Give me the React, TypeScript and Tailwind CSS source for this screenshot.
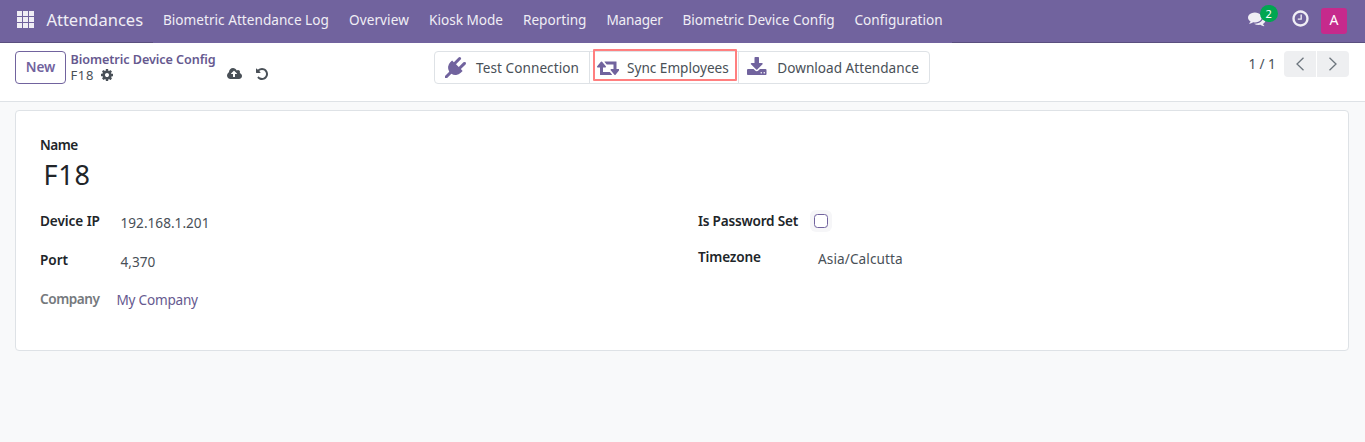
import type { ReactNode } from "react";

const paths = {
  plug: "M1755 453q37 38 37 90.5t-37 90.5l-401 400 150 150-160 160q-163 163-389.5 186.5t-411.5-100.5l-362 362h-181v-181l362-362q-124-185-100.5-411.5t186.5-389.5l160-160 150 150 400-401q38-37 91-37t90 37 37 90.5-37 90.5l-400 401 234 234 401-400q38-37 91-37t90 37z",
  retweet: "M1280 1504q0 13-9.5 22.5t-22.5 9.5h-960q-8 0-13.5-2t-9-7-5.5-8-3-11.5-1-11.5v-600h-192q-26 0-45-19t-19-45q0-24 15-41l320-384q19-22 49-22t49 22l320 384q15 17 15 41 0 26-19 45t-45 19h-192v384h576q16 0 25 11l160 192q7 10 7 21zm640-416q0 24-15 41l-320 384q-20 23-49 23t-49-23l-320-384q-15-17-15-41 0-26 19-45t45-19h192v-384h-576q-16 0-25-12l-160-192q-7-9-7-20 0-13 9.5-22.5t22.5-9.5h960q8 0 13.5 2t9 7 5.5 8 3 11.5 1 11.5v600h192q26 0 45 19t19 45z",
  download: "M1344 1344q0-26-19-45t-45-19-45 19-19 45 19 45 45 19 45-19 19-45zm256 0q0-26-19-45t-45-19-45 19-19 45 19 45 45 19 45-19 19-45zm128-224v320q0 40-28 68t-68 28h-1472q-40 0-68-28t-28-68v-320q0-40 28-68t68-28h465l135 136q58 56 136 56t136-56l136-136h464q40 0 68 28t28 68zm-325-569q17 41-14 70l-448 448q-18 19-45 19t-45-19l-448-448q-31-29-14-70 17-39 59-39h256v-448q0-26 19-45t45-19h256q26 0 45 19t19 45v448h256q42 0 59 39z",
  cog: "M1152 896q0-106-75-181t-181-75-181 75-75 181 75 181 181 75 181-75 75-181zm512-109v222q0 12-8 23t-20 13l-185 28q-19 54-39 91 35 50 107 138 10 12 10 25t-9 23q-27 37-99 108t-94 71q-12 0-26-9l-138-108q-44 23-91 38-16 136-29 186-7 28-36 28h-222q-14 0-24.5-8.5t-11.5-21.5l-28-184q-49-16-90-37l-141 107q-10 9-25 9-14 0-25-11-126-114-165-168-7-10-7-23 0-12 8-23 15-21 51-66.5t54-70.5q-27-50-41-99l-183-27q-13-2-21-12.5t-8-23.5v-222q0-12 8-23t19-13l186-28q14-46 39-92-40-57-107-138-10-12-10-24 0-10 9-23 26-36 98.5-107.5t94.5-71.5q13 0 26 10l138 107q44-23 91-38 16-136 29-186 7-28 36-28h222q14 0 24.5 8.5t11.5 21.5l28 184q49 16 90 37l142-107q9-9 24-9 13 0 25 10 129 119 165 170 7 8 7 22 0 12-8 23-15 21-51 66.5t-54 70.5q26 50 41 98l183 28q13 2 21 12.5t8 23.5z",
  cloudUpload: "M1280 864q0-14-9-23l-352-352q-9-9-23-9t-23 9l-351 351q-10 12-10 24 0 14 9 23t23 9h224v352q0 13 9.5 22.5t22.5 9.5h192q13 0 22.5-9.5t9.5-22.5v-352h224q13 0 22.5-9.5t9.5-22.5zm640 288q0 159-112.5 271.5t-271.5 112.5h-1088q-185 0-316.5-131.5t-131.5-316.5q0-130 70-240t188-165q-2-30-2-43 0-212 150-362t362-150q156 0 285.5 87t188.5 231q71-62 166-62 106 0 181 75t75 181q0 76-41 138 130 31 213.5 135.5t83.5 238.5z",
  undo: "M1664 896q0 156-61 298t-164 245-245 164-298 61q-172 0-327-72.5t-264-204.5q-7-10-6.5-22.5t8.5-20.5l137-138q10-9 25-9 16 2 23 12 73 95 179 147t225 52q104 0 198.5-40.5t163.5-109.5 109.5-163.5 40.5-198.5-40.5-198.5-109.5-163.5-163.5-109.5-198.5-40.5q-98 0-188 35.5t-160 101.5l137 138q31 30 14 69-17 40-59 40h-448q-26 0-45-19t-19-45v-448q0-42 40-59 39-17 69 14l130 129q107-101 244.5-156.5t284.5-55.5q156 0 298 61t245 164 164 245 61 298z",
  comments: "M1408 768q0 139-94 257t-256.5 186.5-353.5 68.5q-86 0-176-16-124 88-278 128-36 9-86 16h-3q-11 0-20.5-8t-11.5-21q-1-3-1-6.5t.5-6.5 2-6l2.5-5 3.5-5.5 4-5 4.5-5 4-4.5q5-6 23-25t26-29.5 22.5-29 25-38.5 20.5-44q-124-72-195-177t-71-224q0-139 94-257t256.5-186.5 353.5-68.5 353.5 68.5 256.5 186.5 94 257zm384 256q0 120-71 224.5t-195 176.5q10 24 20.5 44t25 38.5 22.5 29 26 29.5 23 25q1 1 4 4.5t4.5 5 4 5 3.5 5.5l2.5 5 2 6 .5 6.5-1 6.5q-3 14-13 22t-22 7q-50-7-86-16-154-40-278-128-90 16-176 16-271 0-472-132 58 4 88 4 161 0 309-45t264-129q125-92 192-212t67-254q0-77-23-152 129 71 204 178t75 230z",
  clock: "M1024 544v448q0 14-9 23t-23 9h-320q-14 0-23-9t-9-23v-64q0-14 9-23t23-9h224v-352q0-14 9-23t23-9h64q14 0 23 9t9 23zm416 352q0-148-73-273t-198-198-273-73-273 73-198 198-73 273 73 273 198 198 273 73 273-73 198-198 73-273zm224 0q0 209-103 385.5t-279.5 279.5-385.5 103-385.5-103-279.5-279.5-103-385.5 103-385.5 279.5-279.5 385.5-103 385.5 103 279.5 279.5 103 385.5z",
};

function Icon({ name, box = "0 0 1792 1792", className }: { name: keyof typeof paths; box?: string; className: string }) {
  return (
    <svg viewBox={box} fill="currentColor" className={`shrink-0 ${className}`}>
      <path d={paths[name]} />
    </svg>
  );
}

const menu = [
  { label: "Biometric Attendance Log", style: "w-[166px] tracking-[0.02px]" },
  { label: "Overview", style: "w-[60px] tracking-[0.08px]" },
  { label: "Kiosk Mode", style: "w-[74px]" },
  { label: "Reporting", style: "w-[63.5px]" },
  { label: "Manager", style: "w-[56px] tracking-[-0.2px]" },
  { label: "Biometric Device Config", style: "w-[152px]" },
  { label: "Configuration", style: "w-[88px]" },
];

function Navbar() {
  return (
    <nav className="relative flex h-[43px] items-center border-b border-[#5a4f7f] bg-[#71639e] pr-[18px] pl-[17px] text-[#f0eef5]">
      <span className="absolute bottom-[-1px] left-[153px] h-px w-[799px] bg-[#71639e]" />
      <div className="mt-[-4px] grid grid-cols-3 gap-px">
        {Array.from({ length: 9 }, (_, i) => (
          <span key={i} className="size-[5px] bg-[#f0eef5]" />
        ))}
      </div>
      <span className="-mt-0.5 ml-[12.4px] w-[96.6px] text-[16.5px] leading-5">Attendances</span>
      <div className="-mt-0.5 ml-5 flex gap-5">
        {menu.map((m) => (
          <a key={m.label} className={m.style}>{m.label}</a>
        ))}
      </div>
      <div className="-mt-px ml-auto flex items-center">
        <div className="relative mr-[25.5px]">
          <Icon name="comments" className="mt-[-4px] size-[17.5px]" />
          <span className="absolute top-[-8.5px] left-[11.5px] flex h-[17px] w-[18.5px] items-center justify-center rounded-full bg-[#00a651] text-[11px] leading-none text-white">2</span>
        </div>
        <Icon name="clock" className="mt-[-4px] mr-[11px] size-[19px]" />
        <span className="flex size-[26px] items-center justify-center rounded-[3px] bg-[#c62a8c] pb-px text-[14px] leading-none text-white">A</span>
      </div>
    </nav>
  );
}

function ActionButton({ children, className }: { children: ReactNode; className: string }) {
  return <button className={`flex items-center border-[#dee2e6] text-left ${className}`}>{children}</button>;
}

function ControlPanel() {
  return (
    <header className="flex h-[59px] items-start border-b border-[#dee2e6] bg-white pt-2 pr-4 pl-[15px] text-[#495057]">
      <button className="h-[33px] w-[51px] rounded-[4px] border border-[#71639e] pb-px font-semibold tracking-[-0.15px] text-[#71639e]">New</button>
      <div className="ml-[4.5px] w-[156.5px]">
        <div className="text-[12.6px] leading-[17px] font-semibold tracking-[-0.06px] text-[#66598f]">Biometric Device Config</div>
        <div className="flex items-center text-[13px] leading-[15px]">
          <span className="w-[29.5px] tracking-[0.6px]">F18</span>
          <Icon name="cog" className="mt-[-2px] size-[14px]" />
        </div>
      </div>
      <div className="mt-4 flex w-[207px] items-center gap-[13px]">
        <Icon name="cloudUpload" box="0 0 1920 1792" className="h-[14px] w-[15px]" />
        <Icon name="undo" className="size-[14px]" />
      </div>
      <div className="relative flex h-[33px] w-[496px] rounded-[4px] border border-[#dee2e6]">
        <ActionButton className="w-[155px] gap-[10px] border-r pl-[10px]">
          <Icon name="plug" className="size-[21px] text-[#71639e]" />
          <span className="tracking-[0.06px]">Test Connection</span>
        </ActionButton>
        <ActionButton className="w-[149px] gap-[8px] border-r pl-[6.5px]">
          <Icon name="retweet" box="0 0 1920 1792" className="h-[21px] w-[22.5px] text-[#71639e]" />
          <span>Sync Employees</span>
        </ActionButton>
        <ActionButton className="gap-[10.5px] pl-[8.3px]">
          <Icon name="download" box="64 0 1664 1792" className="h-[21px] w-[19.5px] text-[#71639e]" />
          <span className="tracking-[0.01px]">Download Attendance</span>
        </ActionButton>
        <span className="absolute top-[-3px] left-[158px] h-[32px] w-[144px] rounded-[1px] border-2 border-[#ff7f7f]" />
      </div>
      <span className="mt-[3px] ml-auto w-[35.5px] tracking-[-0.12px]">1 / 1</span>
      <div className="flex gap-px text-[#6c757d]">
        <button className="flex h-[26px] w-8 items-center justify-center rounded-l-[4px] bg-[#eeeff1]">
          <svg viewBox="0 0 10 14" className="h-[14px] w-[10px]" fill="none" stroke="currentColor" strokeWidth="1.3"><path d="M8.5 .7 2 7l6.5 6.3" /></svg>
        </button>
        <button className="flex h-[26px] w-8 items-center justify-center rounded-r-[4px] bg-[#eeeff1]">
          <svg viewBox="0 0 10 14" className="h-[14px] w-[10px]" fill="none" stroke="currentColor" strokeWidth="1.3"><path d="M1.5 .7 8 7l-6.5 6.3" /></svg>
        </button>
      </div>
    </header>
  );
}

function Field({ label, labelClass = "", className, children }: { label: string; labelClass?: string; className: string; children: ReactNode }) {
  return (
    <div className={`flex items-start ${className}`}>
      <label className={`shrink-0 font-semibold ${labelClass}`}>{label}</label>
      {children}
    </div>
  );
}

function Sheet() {
  return (
    <main className="mx-[15px] mt-2 h-[241px] w-[1334px] rounded-[4px] border border-[#dee2e6] bg-white pt-6 pl-6 text-[#212529]">
      <div className="font-semibold tracking-[-0.55px]">Name</div>
      <h1 className="mt-[2px] pl-[3.5px] text-[27px] leading-9 tracking-[0.8px]">F18</h1>
      <div className="mt-[18px] flex">
        <div className="w-[658px]">
          <Field label="Device IP" labelClass="w-[80.5px] tracking-[-0.08px]" className="h-[39px]">
            <span className="mt-0.5 tracking-[0.02px] text-[#495057]">192.168.1.201</span>
          </Field>
          <Field label="Port" labelClass="w-[80.5px] tracking-[-0.05px]" className="h-[39px]">
            <span className="mt-0.5 tracking-[0.03px] text-[#495057]">4,370</span>
          </Field>
          <Field label="Company" labelClass="w-[76.5px] tracking-[-0.45px] text-[#75797d]" className="h-5">
            <span className="mt-px tracking-[-0.24px] text-[#66598f]">My Company</span>
          </Field>
        </div>
        <div>
          <Field label="Is Password Set" labelClass="w-[112px] tracking-[-0.22px]" className="h-9">
            <span className="-mt-px flex size-[22px] items-center justify-center rounded-[6px] bg-[#f6f6f8]">
              <input type="checkbox" className="size-[14px] appearance-none rounded-[3.5px] border border-[#71639e] bg-white" />
            </span>
          </Field>
          <Field label="Timezone" labelClass="w-[120px] tracking-[-0.15px]" className="h-5">
            <span className="mt-0.5 tracking-[0.1px] text-[#495057]">Asia/Calcutta</span>
          </Field>
        </div>
      </div>
    </main>
  );
}

export default function App() {
  return (
    <div className="h-[442px] w-[1365px] overflow-hidden bg-[#f8f9fa] font-['Noto_Sans',sans-serif] text-[13.6px] leading-5 whitespace-nowrap">
      <Navbar />
      <ControlPanel />
      <Sheet />
    </div>
  );
}
